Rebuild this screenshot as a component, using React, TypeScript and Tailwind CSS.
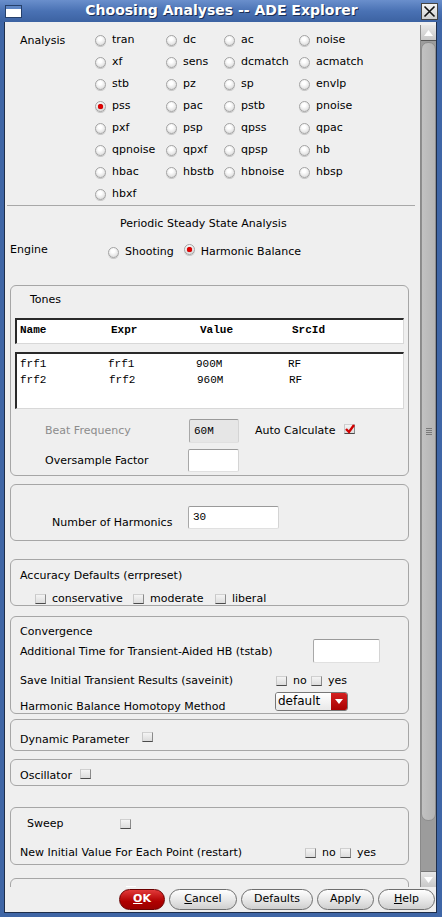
import React from "react";

const sans = "font-['DejaVu_Sans','Liberation_Sans',sans-serif]";
const mono = "font-['Liberation_Mono','DejaVu_Sans_Mono',monospace]";

const Radio = ({ on }: { on?: boolean }) => (
    <span className="relative inline-block w-[11px] h-[11px] shrink-0 rounded-full border border-[#a4a4a4] bg-[radial-gradient(circle_at_45%_35%,#ffffff_20%,#d2d2d2_100%)] shadow-[0_1px_0_#c8c8c8]">
        {on && <span className="absolute left-[2px] top-[2px] w-[5px] h-[5px] rounded-full bg-[#e00000] shadow-[0_0_1px_#700]" />}
    </span>
)

const Check = ({ on }: { on?: boolean }) => (
    <span className="relative inline-block w-[11px] h-[10px] shrink-0 border border-t-[#d0d0d0] border-l-[#c8c8c8] border-b-[#4a4a4a] border-r-[#8a8a8a] bg-[linear-gradient(#f4f4f4,#dcdcdc)]">
        {on && (
            <svg className="absolute -left-[1px] -top-[2px]" width="12" height="12" viewBox="0 0 12 12">
                <path d="M2 6 L5 9 L10 2" fill="none" stroke="#d00000" strokeWidth="2.4" />
            </svg>
        )}
    </span>
)

const Field = ({ w, h, value, disabled }: { w: number; h: number; value?: string; disabled?: boolean }) => (
    <div
        className={`${mono} text-[11px] text-black pl-[4px] flex items-center rounded-[2px] border border-t-[#9a9a9a] border-l-[#a8a8a8] border-b-[#e0e0e0] border-r-[#d4d4d4] ${disabled ? 'bg-[#e6e6e6]' : 'bg-white'}`}
        style={{ width: w, height: h }}>
        {value}
    </div>
)

const analyses: Array<Array<string>> = [
    ['tran', 'dc', 'ac', 'noise'],
    ['xf', 'sens', 'dcmatch', 'acmatch'],
    ['stb', 'pz', 'sp', 'envlp'],
    ['pss', 'pac', 'pstb', 'pnoise'],
    ['pxf', 'psp', 'qpss', 'qpac'],
    ['qpnoise', 'qpxf', 'qpsp', 'hb'],
    ['hbac', 'hbstb', 'hbnoise', 'hbsp'],
    ['hbxf', '', '', ''],
]

const colWidths = ['w-[71px]', 'w-[58px]', 'w-[75px]', 'w-[80px]']

const Btn = ({ label, u, w, primary }: { label: string; u: string; w: number; primary?: boolean }) => {
    const rest = label.slice(u.length)
    return (
        <div
            className={`h-[21px] rounded-full flex items-center justify-center text-[11px] border ${primary
                ? 'border-[#6a0000] bg-[linear-gradient(#e23a3a,#b00000_60%,#9a0000)] text-white font-bold'
                : 'border-[#6e6e6e] bg-[linear-gradient(#ffffff,#e6e6e6_55%,#cfcfcf)] text-black'}`}
            style={{ width: w }}>
            {u ? <span><span className="underline">{u}</span>{rest}</span> : <span>{label}</span>}
        </div>
    )
}

const App = () => {
    return (
        <div className={`${sans} w-[442px] h-[917px] overflow-hidden bg-[#3f66a6] flex flex-col text-[11px] text-black`}>
            {/* title bar */}
            <div className="h-[22px] shrink-0 flex items-center bg-[linear-gradient(#6a8fcc,#4a72b4_50%,#3c62a2)] relative">
                <div className="ml-[5px] w-[17px] h-[13px] border border-[#26406b] bg-white flex flex-col">
                    <div className="h-[3px] bg-[#5f86c4]" />
                </div>
                <div className="flex-1 text-center text-white font-bold text-[14px] font-['DejaVu_Sans',sans-serif] [text-shadow:1px_1px_0_#1b2f55] -mt-[1px]">
                    Choosing Analyses -- ADE Explorer
                </div>
                <div className="mr-[4px] w-[17px] h-[17px] bg-[linear-gradient(#f4f4f4,#cfcfcf)] border border-[#444] flex items-center justify-center">
                    <svg width="13" height="13" viewBox="0 0 13 13">
                        <path d="M1.5 1.5 L11.5 11.5 M11.5 1.5 L1.5 11.5" stroke="#111" strokeWidth="1.6" />
                    </svg>
                </div>
            </div>

            {/* body */}
            <div className="flex-1 ml-[4px] mr-[5px] mb-[4px] border-l border-r border-b border-[#1e2e4a] bg-[#efefef] flex flex-col">
                <div className="h-[3px]" />
                <div className="h-[862px] flex">
                    {/* scroll content */}
                    <div className="flex-1 overflow-hidden flex flex-col">
                        <div className="flex pt-[4px]">
                            <div className="w-[90px] pl-[15px] h-[22px] flex items-center pt-[2px]">Analysis</div>
                            <div className="flex flex-col">
                                {analyses.map((row, ri) => (
                                    <div key={ri} className="flex h-[22px] items-center">
                                        {row.map((a, ci) => (
                                            <div key={ci} className={`${colWidths[ci]} flex items-center`}>
                                                {a && <><Radio on={a === 'pss'} /><span className="ml-[6px] mt-[1px]">{a}</span></>}
                                            </div>
                                        ))}
                                    </div>
                                ))}
                            </div>
                        </div>
                        <div className="ml-[2px] w-[408px] h-[1px] shrink-0 bg-[#a8a8a8]" />
                        <div className="mt-[11px] h-[14px] leading-[14px] pl-[115px]">Periodic Steady State Analysis</div>
                        <div className="mt-[14px] h-[14px] flex items-center">
                            <div className="w-[103px] pl-[5px] -mt-[4px]">Engine</div>
                            <Radio />
                            <span className="ml-[6px]">Shooting</span>
                            <span className="ml-[10px]"><Radio on /></span>
                            <span className="ml-[6px]">Harmonic Balance</span>
                        </div>

                        {/* Tones */}
                        <div className="mt-[26px] ml-[5px] w-[399px] h-[191px] shrink-0 border border-[#a6a6a6] rounded-[6px] flex flex-col">
                            <div className="pt-[7px] pl-[19px] h-[21px] leading-[14px]">Tones</div>
                            <div className={`${mono} mt-[11px] mx-[4px] h-[26px] bg-white border-t-2 border-l-2 border-t-[#2a2a2a] border-l-[#2a2a2a] border-b border-r border-b-[#d8d8d8] border-r-[#d8d8d8] flex items-center text-[11px] font-semibold pl-[3px] pb-[2px]`}>
                                <span className="w-[91px]">Name</span>
                                <span className="w-[89px]">Expr</span>
                                <span className="w-[92px]">Value</span>
                                <span>SrcId</span>
                            </div>
                            <div className={`${mono} mt-[8px] mx-[4px] h-[57px] bg-white border-t-2 border-l-2 border-t-[#2a2a2a] border-l-[#2a2a2a] border-b border-r border-b-[#d8d8d8] border-r-[#d8d8d8] pt-[2px] pl-[3px] text-[11px] leading-[16px]`}>
                                <div className="flex"><span className="w-[88px]">frf1</span><span className="w-[88px]">frf1</span><span className="w-[92px]">900M</span><span>RF</span></div>
                                <div className="flex"><span className="w-[89px]">frf2</span><span className="w-[88px]">frf2</span><span className="w-[92px]">960M</span><span>RF</span></div>
                            </div>
                            <div className="mt-[10px] flex items-center">
                                <span className="pl-[34px] w-[178px] text-[#8c8c8c] mt-[1px]">Beat Frequency</span>
                                <Field w={50} h={24} value="60M" disabled />
                                <span className="ml-[16px] mt-[1px]">Auto Calculate</span>
                                <span className="ml-[9px]"><Check on /></span>
                            </div>
                            <div className="mt-[6px] flex items-center">
                                <span className="pl-[34px] w-[177px] mt-[1px]">Oversample Factor</span>
                                <Field w={51} h={23} />
                            </div>
                        </div>

                        {/* Harmonics */}
                        <div className="mt-[8px] ml-[5px] w-[399px] h-[57px] shrink-0 border border-[#a6a6a6] rounded-[6px] pt-[21px] flex flex-col">
                            <div className="flex items-start">
                                <span className="pl-[41px] w-[177px] mt-[9px]">Number of Harmonics</span>
                                <Field w={91} h={23} value="30" />
                            </div>
                        </div>

                        {/* Accuracy */}
                        <div className="mt-[18px] ml-[5px] w-[399px] h-[47px] shrink-0 border border-[#a6a6a6] rounded-[6px] flex flex-col">
                            <div className="pl-[9px] mt-[9px] h-[14px] leading-[14px]">Accuracy Defaults (errpreset)</div>
                            <div className="mt-[8px] flex items-center pl-[24px]">
                                <Check /><span className="ml-[6px] w-[81px]">conservative</span>
                                <Check /><span className="ml-[6px] w-[65px]">moderate</span>
                                <Check /><span className="ml-[6px]">liberal</span>
                            </div>
                        </div>

                        {/* Convergence */}
                        <div className="mt-[10px] ml-[5px] w-[399px] h-[98px] shrink-0 border border-[#a6a6a6] rounded-[6px] flex flex-col pl-[9px]">
                            <div className="mt-[8px] h-[14px] leading-[14px]">Convergence</div>
                            <div className="flex items-start">
                                <span className="w-[293px] mt-[5px]">Additional Time for Transient-Aided HB (tstab)</span>
                                <Field w={67} h={24} />
                            </div>
                            <div className="mt-[11px] flex items-center h-[14px]">
                                <span className="w-[256px]">Save Initial Transient Results (saveinit)</span>
                                <Check /><span className="ml-[6px] w-[18px]">no</span>
                                <Check /><span className="ml-[6px]">yes</span>
                            </div>
                            <div className="mt-[4px] flex items-start">
                                <span className="w-[255px] mt-[7px]">Harmonic Balance Homotopy Method</span>
                                <div className="w-[73px] h-[19px] flex rounded-[3px] border border-[#777] overflow-hidden">
                                    <div className="flex-1 bg-[linear-gradient(#ffffff,#e8e8e8)] pl-[2px] leading-[16px] text-[12px]">default</div>
                                    <div className="w-[16px] bg-[linear-gradient(#d42020,#a80000)] flex items-center justify-center">
                                        <svg width="8" height="5" viewBox="0 0 8 5"><path d="M0 0 L8 0 L4 5 Z" fill="#fff" /></svg>
                                    </div>
                                </div>
                            </div>
                        </div>

                        {/* Dynamic parameter */}
                        <div className="mt-[5px] ml-[5px] w-[399px] h-[32px] shrink-0 border border-[#a6a6a6] rounded-[6px] flex items-center pl-[9px] pt-[10px]">
                            <span>Dynamic Parameter</span>
                            <span className="ml-[13px] -mt-[2px]"><Check /></span>
                        </div>

                        {/* Oscillator */}
                        <div className="mt-[8px] ml-[5px] w-[399px] h-[27px] shrink-0 border border-[#a6a6a6] rounded-[6px] flex items-center pl-[9px] pt-[8px]">
                            <span>Oscillator</span>
                            <span className="ml-[8px]"><Check /></span>
                        </div>

                        {/* Sweep */}
                        <div className="mt-[21px] ml-[5px] w-[399px] h-[58px] shrink-0 border border-[#a6a6a6] rounded-[6px] flex flex-col pl-[9px]">
                            <div className="mt-[9px] flex items-center h-[14px]">
                                <span className="pl-[7px] w-[100px]">Sweep</span>
                                <Check />
                            </div>
                            <div className="mt-[15px] flex items-center h-[14px]">
                                <span className="w-[285px]">New Initial Value For Each Point (restart)</span>
                                <Check /><span className="ml-[6px] w-[18px]">no</span>
                                <Check /><span className="ml-[6px]">yes</span>
                            </div>
                        </div>

                        <div className="mt-[13px] ml-[5px] w-[399px] h-[40px] shrink-0 border border-[#a6a6a6] rounded-[6px] relative">
                            <div className="absolute left-[115px] top-[7px] w-[10px] h-[3px] bg-white" />
                        </div>
                    </div>

                    {/* scrollbar */}
                    <div className="w-[16px] flex flex-col border-l border-[#8a8a8a] bg-[#9c9c9c]">
                        <div className="h-[16px] bg-[linear-gradient(#e8e8e8,#c8c8c8)] border-b border-[#555] flex items-center justify-center">
                            <svg width="9" height="6" viewBox="0 0 9 6"><path d="M0 6 L4.5 0 L9 6 Z" fill="#fff" /></svg>
                        </div>
                        <div className="h-[779px] mt-[1px] rounded-[7px] bg-[linear-gradient(90deg,#c2c2c2,#b4b4b4)] border border-[#8e8e8e] flex items-center justify-center">
                            <div className="flex flex-col gap-[1px]">
                                <div className="w-[6px] h-[1px] bg-[#7a7a7a]" />
                                <div className="w-[6px] h-[1px] bg-[#7a7a7a]" />
                                <div className="w-[6px] h-[1px] bg-[#7a7a7a]" />
                                <div className="w-[6px] h-[1px] bg-[#7a7a7a]" />
                            </div>
                        </div>
                        <div className="flex-1" />
                        <div className="h-[16px] bg-[linear-gradient(#e8e8e8,#c8c8c8)] border-t border-[#777] flex items-center justify-center">
                            <svg width="9" height="6" viewBox="0 0 9 6"><path d="M0 0 L9 0 L4.5 6 Z" fill="#fff" /></svg>
                        </div>
                    </div>
                </div>

                {/* buttons */}
                <div className="flex-1 flex items-center justify-end gap-[4px] pr-[1px]">
                    <Btn label="OK" u="O" w={46} primary />
                    <Btn label="Cancel" u="C" w={68} />
                    <Btn label="Defaults" u="" w={72} />
                    <Btn label="Apply" u="" w={57} />
                    <Btn label="Help" u="H" w={57} />
                </div>
            </div>
        </div>
    );
}

export default App;
